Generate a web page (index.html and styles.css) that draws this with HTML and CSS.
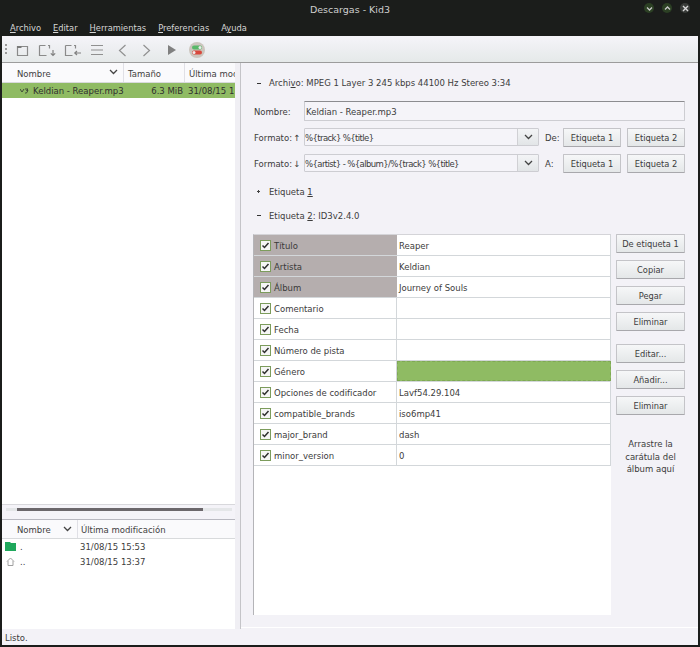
FILE: index.html
```html
<!DOCTYPE html>
<html lang="es">
<head>
<meta charset="utf-8">
<title>Descargas - Kid3</title>
<link rel="stylesheet" href="styles.css">
</head>
<body>
<svg class="defs" width="0" height="0"><defs>
  <symbol id="chk" viewBox="0 0 11 11"><rect x=".5" y=".5" width="10" height="10" fill="#f6f6f6" stroke="#7c9c5c"/><path d="M2.500 5.500l2 2 4-4.500" fill="none" stroke="#2e2e2e" stroke-width="1.500"/></symbol>
  <symbol id="down" viewBox="0 0 9 6"><path d="M1 1l3.500 3.500L8 1" fill="none" stroke="#444" stroke-width="1.300"/></symbol>
</defs></svg>
<div class="window">
  <header class="titlebar">
    <div class="title-row">
      <span class="title">Descargas - Kid3</span>
      <div class="win-btns">
        <span class="win-btn"><svg width="7" height="7" viewBox="0 0 7 7"><path d="M1 2.500l2.500 2.500L6 2.500" fill="none" stroke="#c8c8c8" stroke-width="1.300"/></svg></span>
        <span class="win-btn"><svg width="7" height="7" viewBox="0 0 7 7"><path d="M1 4.500L3.500 2 6 4.500" fill="none" stroke="#c8c8c8" stroke-width="1.300"/></svg></span>
        <span class="win-btn win-close"><svg width="7" height="7" viewBox="0 0 7 7"><path d="M1 1l5 5M6 1L1 6" fill="none" stroke="#d8d8d8" stroke-width="1.400"/></svg></span>
      </div>
    </div>
    <nav class="menubar">
      <span><u>A</u>rchivo</span><span><u>E</u>ditar</span><span><u>H</u>erramientas</span><span><u>P</u>referencias</span><span>A<u>y</u>uda</span>
    </nav>
  </header>
  <div class="toolbar">
    <span class="grip"></span>
    <svg class="tool t1" width="13" height="13" viewBox="0 0 13 13"><path d="M1.500 2.500h10v9h-10z" fill="none" stroke="#8a8a8a" stroke-width="1.200"/><path d="M1 3h4.500" stroke="#7a7a7a" stroke-width="2"/></svg>
    <svg class="tool t2" width="18" height="13" viewBox="0 0 18 13"><path d="M1.500 1.500h6M1.500 1.500v10h7M10 1.500h1.500v3" fill="none" stroke="#8a8a8a" stroke-width="1.200"/><path d="M15 6v5.500M12.800 9.300l2.200 2.200 2.200-2.200" fill="none" stroke="#808080" stroke-width="1.200"/></svg>
    <svg class="tool t3" width="18" height="13" viewBox="0 0 18 13"><path d="M1.500 1.500h6M1.500 1.500v10h7M10 1.500h1.500v3" fill="none" stroke="#8a8a8a" stroke-width="1.200"/><path d="M17 9h-6M13 7l-2.200 2 2.200 2" fill="none" stroke="#808080" stroke-width="1.200"/></svg>
    <svg class="tool t4" width="12" height="12" viewBox="0 0 12 12"><path d="M0 1.500h12M0 6h12M0 10.500h12" stroke="#909090" stroke-width="1.100"/></svg>
    <svg class="tool t5" width="9" height="13" viewBox="0 0 9 13"><path d="M7.500 1L1.500 6.500 7.500 12" fill="none" stroke="#909090" stroke-width="1.200"/></svg>
    <svg class="tool t6" width="9" height="13" viewBox="0 0 9 13"><path d="M1.500 1l6 5.500-6 5.500" fill="none" stroke="#909090" stroke-width="1.200"/></svg>
    <svg class="tool t7" width="10" height="12" viewBox="0 0 10 12"><path d="M1 1l8 5-8 5z" fill="#808080"/></svg>
    <svg class="tool" width="16" height="16" viewBox="0 0 16 16"><circle cx="8" cy="8" r="8" fill="#cbc5bd"/><rect x="3" y="3.500" width="10" height="4" rx="2" fill="#58b868"/><circle cx="11" cy="5.500" r="1.500" fill="#eee"/><rect x="3" y="8.500" width="10" height="4" rx="2" fill="#d8483c"/><circle cx="5" cy="10.500" r="1.500" fill="#eee"/></svg>
  </div>
  <main class="main">
    <aside class="left">
      <section class="file-list">
        <div class="head-row file-head">
          <div class="hcell hname">Nombre<svg class="sort" width="9" height="6"><use href="#down"/></svg></div>
          <div class="hcell hsize">Tamaño</div>
          <div class="hcell hdate">Última mod</div>
        </div>
        <div class="file-row">
          <svg class="mp3" width="9" height="6" viewBox="0 0 9 6"><path d="M0 1l2 3 2-3M5 1h3l-1.500 1.500H8L6.500 5H5" fill="none" stroke="#3f4a38"/></svg>
          <span class="fname">Keldian - Reaper.mp3</span>
          <span class="fsize">6.3 MiB</span>
          <span class="fdate">31/08/15 1</span>
        </div>
        <div class="scroll-wrap"><div class="scroll-thumb"></div></div>
      </section>
      <section class="dir-list">
        <div class="head-row">
          <div class="hcell dname">Nombre<svg class="sort" width="9" height="6"><use href="#down"/></svg></div>
          <div class="hcell ddate">Última modificación</div>
        </div>
        <div class="dir-row">
          <svg class="dir-ico" width="11" height="9" viewBox="0 0 11 9"><path d="M0 0h5l1 1h5v8H0z" fill="#1fa85c"/></svg>
          <span class="dn">.</span><span>31/08/15 15:53</span>
        </div>
        <div class="dir-row">
          <svg class="dir-ico" width="11" height="9" viewBox="0 0 11 9"><path d="M2 4.500L5.500 1 9 4.500M3 4v4.500h5V4" fill="none" stroke="#a0a0a0"/></svg>
          <span class="dn">..</span><span>31/08/15 13:37</span>
        </div>
      </section>
    </aside>
    <div class="splitter"></div>
    <section class="right">
      <div class="sect-line arch"><span class="tog"><i class="minus"></i></span><span>Archi<u>v</u>o: MPEG 1 Layer 3 245 kbps 44100 Hz Stereo 3:34</span></div>
      <div class="form-row name-row">
        <label class="lbl">Nombre:</label>
        <div class="input name-input">Keldian - Reaper.mp3</div>
      </div>
      <div class="form-row fmt-row">
        <label class="lbl">Formato: ↑</label>
        <div class="input combo"><span class="combo-text">%{track} %{title}</span><span class="combo-arrow"><svg width="9" height="6"><use href="#down"/></svg></span></div>
        <span class="side-lbl">De:</span>
        <button class="btn tag-btn">Etiqueta 1</button>
        <button class="btn tag-btn">Etiqueta 2</button>
      </div>
      <div class="form-row fmt-row">
        <label class="lbl">Formato: ↓</label>
        <div class="input combo"><span class="combo-text">%{artist} - %{album}/%{track} %{title}</span><span class="combo-arrow"><svg width="9" height="6"><use href="#down"/></svg></span></div>
        <span class="side-lbl">A:</span>
        <button class="btn tag-btn">Etiqueta 1</button>
        <button class="btn tag-btn">Etiqueta 2</button>
      </div>
      <div class="sect-line tag1"><span class="tog"><i class="plus"></i></span><span>Etiqueta <u>1</u></span></div>
      <div class="sect-line tag2"><span class="tog"><i class="minus"></i></span><span>Etiqueta <u>2</u>: ID3v2.4.0</span></div>
      <div class="tag-area">
        <div class="table">
          <div class="trow"><div class="c1 sel"><svg class="chk" width="11" height="11"><use href="#chk"/></svg>Título</div><div class="c2">Reaper</div></div>
          <div class="trow"><div class="c1 sel"><svg class="chk" width="11" height="11"><use href="#chk"/></svg>Artista</div><div class="c2">Keldian</div></div>
          <div class="trow"><div class="c1 sel"><svg class="chk" width="11" height="11"><use href="#chk"/></svg>Álbum</div><div class="c2">Journey of Souls</div></div>
          <div class="trow"><div class="c1"><svg class="chk" width="11" height="11"><use href="#chk"/></svg>Comentario</div><div class="c2"></div></div>
          <div class="trow"><div class="c1"><svg class="chk" width="11" height="11"><use href="#chk"/></svg>Fecha</div><div class="c2"></div></div>
          <div class="trow"><div class="c1"><svg class="chk" width="11" height="11"><use href="#chk"/></svg>Número de pista</div><div class="c2"></div></div>
          <div class="trow"><div class="c1"><svg class="chk" width="11" height="11"><use href="#chk"/></svg>Género</div><div class="c2 cur"></div></div>
          <div class="trow"><div class="c1"><svg class="chk" width="11" height="11"><use href="#chk"/></svg>Opciones de codificador</div><div class="c2">Lavf54.29.104</div></div>
          <div class="trow"><div class="c1"><svg class="chk" width="11" height="11"><use href="#chk"/></svg>compatible_brands</div><div class="c2">iso6mp41</div></div>
          <div class="trow"><div class="c1"><svg class="chk" width="11" height="11"><use href="#chk"/></svg>major_brand</div><div class="c2">dash</div></div>
          <div class="trow"><div class="c1"><svg class="chk" width="11" height="11"><use href="#chk"/></svg>minor_version</div><div class="c2">0</div></div>
        </div>
        <div class="actions">
          <button class="btn act">De etiqueta 1</button>
          <button class="btn act">Copiar</button>
          <button class="btn act">Pegar</button>
          <button class="btn act">Eliminar</button>
          <button class="btn act gap">Editar...</button>
          <button class="btn act">Añadir...</button>
          <button class="btn act">Eliminar</button>
          <p class="drop">Arrastre la<br>carátula del<br>álbum aquí</p>
        </div>
      </div>
    </section>
  </main>
  <footer class="status">Listo.</footer>
</div>
</body>
</html>
```
FILE: styles.css
```css
* { box-sizing: border-box; }
html, body { margin: 0; padding: 0; }
body {
  width: 700px;
  height: 647px;
  overflow: hidden;
  font-family: "DejaVu Sans", sans-serif;
  font-size: 8.5px;
  color: #3c3c3c;
}
.defs { position: absolute; }
.window {
  width: 700px;
  height: 647px;
  display: flex;
  flex-direction: column;
  background: #1b1d1b;
  padding: 0 2px 2px;
}
.titlebar { height: 36px; flex: none; color: #d0d0d0; }
.title-row { height: 18px; position: relative; display: flex; align-items: center; justify-content: center; }
.title { font-size: 9.5px; color: #cfcfcf; }
.win-btns { position: absolute; right: 8px; top: 3px; display: flex; gap: 8px; }
.win-btn { width: 10px; height: 10px; border-radius: 50%; background: #2c4024; display: flex; align-items: center; justify-content: center; }
.win-close { background: #3a3d3a; }
.menubar { height: 18px; padding-top: 2px; display: flex; align-items: center; gap: 12px; padding-left: 8px; color: #d6d6d6; font-size: 8.3px; }
.toolbar {
  height: 27px;
  flex: none;
  display: flex;
  align-items: center;
  background: linear-gradient(#f5f4f9, #e5e9e9);
  border-bottom: 1px solid #9c9c9c;
  padding: 2px 0 0 3px;
}
.grip { width: 2px; height: 12px; margin-right: 9px; background: repeating-linear-gradient(#999 0 2px, transparent 2px 4px); }
.tool { flex: none; }
.t1 { margin-right: 9px; }
.t2 { margin-right: 8px; }
.t3 { margin-right: 9px; }
.t4 { margin-right: 15px; }
.t5 { margin-right: 15px; }
.t6 { margin-right: 16px; }
.t7 { margin-right: 12px; }
.main { flex: 1; min-height: 0; display: flex; background: #f3f2f7; }
.left { width: 233px; flex: none; display: flex; flex-direction: column; background: #fff; }
.file-list { height: 456px; flex: none; display: flex; flex-direction: column; }
.head-row { height: 19px; flex: none; display: flex; align-items: center; border-bottom: 1px solid #d8dadc; background: #fafafc; color: #3f3f3f; }
.file-head { height: 20px; }
.hcell { height: 100%; display: flex; align-items: center; position: relative; border-right: 1px solid #e0e0e6; white-space: nowrap; overflow: hidden; padding-top: 2px; }
.hname { width: 122px; padding-left: 15px; }
.hsize { width: 61px; padding-left: 4px; }
.hdate { flex: 1; padding-left: 4px; border-right: 0; }
.sort { position: absolute; right: 5px; top: 6px; }
.file-row { height: 15px; flex: none; display: flex; align-items: center; background: #8fbb63; color: #2f2f2f; padding-top: 1px; }
.mp3 { margin-left: 18px; flex: none; }
.fname { margin-left: 4px; width: 100px; flex: none; white-space: nowrap; }
.fsize { width: 50px; flex: none; text-align: right; white-space: nowrap; }
.fdate { margin-left: 5px; white-space: nowrap; overflow: hidden; }
.scroll-wrap {
  margin-top: auto;
  height: 15px;
  flex: none;
  border-top: 1px solid #d8d8dc;
  background: linear-gradient(#e4e6e8, #e4e6e8) 4px 3px / 226px 3px no-repeat, #f4f3f8;
  position: relative;
}
.scroll-thumb { position: absolute; left: 15px; top: 3px; width: 186px; height: 3px; background: #6b676b; }
.dir-list { flex: 1; display: flex; flex-direction: column; background: #fff; border-top: 1px solid #b8b8c0; }
.dname { width: 76px; padding-left: 15px; }
.ddate { flex: 1; padding-left: 3px; border-right: 0; }
.dir-row { height: 15px; flex: none; display: flex; align-items: center; color: #3c3c3c; }
.dir-ico { margin-left: 3px; flex: none; }
.dn { width: 60px; margin-left: 4px; flex: none; }
.splitter { width: 6px; flex: none; background: #f0eff4; border-right: 1px solid #c4c4c8; }
.right { flex: 1; min-width: 0; display: flex; flex-direction: column; border-bottom: 1px solid #fff; margin-bottom: 1px; padding-left: 13px; }
.sect-line { display: flex; align-items: center; height: 14px; white-space: nowrap; }
.arch { margin-top: 13px; }
.tog { width: 13px; margin-left: 2px; flex: none; display: flex; align-items: center; }
.minus { display: block; width: 4px; height: 1px; margin-left: 1px; background: #333; }
.plus { display: block; width: 3px; height: 3px; margin-left: 1px; background: #444; clip-path: polygon(33% 0, 67% 0, 67% 33%, 100% 33%, 100% 67%, 67% 67%, 67% 100%, 33% 100%, 33% 67%, 0 67%, 0 33%, 33% 33%); }
.form-row { display: flex; align-items: center; }
.name-row { margin-top: 11px; height: 20px; }
.lbl { width: 50px; flex: none; white-space: nowrap; padding-top: 1px; word-spacing: -1.5px; }
.input { height: 100%; border: 1px solid #cdcdd2; border-top-color: #8c8c90; border-radius: 1px; background: #f5f4f9; }
.name-input { width: 381px; padding: 1px 0 0 1px; display: flex; align-items: center; }
.fmt-row { height: 20px; margin-top: 6px; }
.combo { width: 235px; height: 18px; display: flex; align-items: stretch; border-top-color: #cdcdd2; }
.combo-text { flex: 1; display: flex; align-items: center; white-space: nowrap; letter-spacing: -0.6px; padding-top: 1px; }
.combo-arrow { width: 21px; display: flex; align-items: center; justify-content: center; background: linear-gradient(#f3f4f6, #e2e5e7); border-left: 1px solid #d0d0d4; }
.side-lbl { width: 24px; padding: 1px 0 0 6px; flex: none; }
.btn {
  font: inherit;
  font-size: 8.3px;
  color: #3c3c3c;
  padding: 1px 0 0;
  height: 19px;
  border: 1px solid #c4c4c8;
  border-bottom-color: #a8a8ac;
  border-radius: 1px;
  background: linear-gradient(#f6f7f8, #e4e7e8);
  display: block;
  text-align: center;
  white-space: nowrap;
}
.tag-btn { width: 58px; flex: none; margin-right: 6px; }
.tag1 { margin-top: 11px; padding-top: 1px; }
.tag2 { margin-top: 10px; padding-top: 1px; }
.tag-area { flex: 1; min-height: 0; display: flex; margin: 12px 0 0 -1px; }
.table { width: 358px; height: 381px; background: #fff; border-left: 1px solid #b4b4b8; border-top: 1px solid #d4d4d8; flex: none; }
.trow { height: 21px; display: flex; border-bottom: 1px solid #d3d7da; background: #fff; }
.c1 { width: 143px; flex: none; display: flex; align-items: center; padding: 1px 0 0 6px; gap: 3px; white-space: nowrap; border-right: 1px solid #d3d7da; }
.c2 { flex: 1; display: flex; align-items: center; padding: 1px 0 0 2px; white-space: nowrap; border-right: 1px solid #d3d7da; }
.sel { background: #b5aeae; color: #3a3a3a; border-right: 0; }
.cur { background: #8fbb63; border: 1px dashed #7fa855; }
.chk { display: block; flex: none; }
.actions { width: 69px; margin-left: 5px; flex: none; display: flex; flex-direction: column; gap: 7px; }
.act { width: 69px; flex: none; }
.gap { margin-top: 6px; }
.drop { margin: 16px 0 0; text-align: center; line-height: 12.5px; }
.status { height: 16px; flex: none; background: #f3f2f7; padding: 1px 0 0 3px; display: flex; align-items: center; color: #3c3c3c; }
```
